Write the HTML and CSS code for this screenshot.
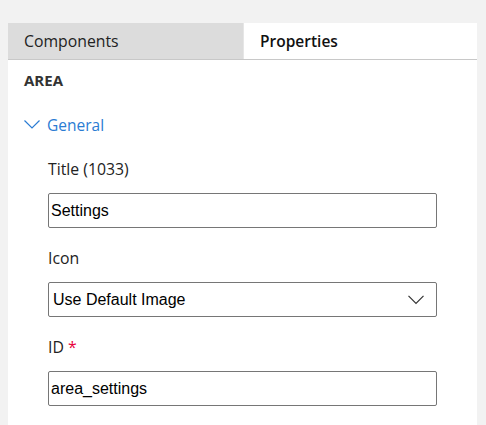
FILE: index.html
```html
<!DOCTYPE html>
<html>
<head>
<meta charset="utf-8">
<link rel="stylesheet" href="styles.css">
</head>
<body>
<div class="panel">
  <div class="tabs">
    <div class="tab tab-inactive">Components</div>
    <div class="tab tab-active">Properties</div>
  </div>
  <div class="content">
    <div class="section-title">AREA</div>
    <div class="group-header">
      <svg class="chev" width="16" height="10" viewBox="0 0 16 10"><path d="M0.5 0.5 L8 8 L15.5 0.5" fill="none" stroke="#2b7cd3" stroke-width="1.2"/></svg>
      <span>General</span>
    </div>
    <div class="fields">
      <div class="label">Title (1033)</div>
      <div class="input">Settings</div>
      <div class="label">Icon</div>
      <div class="input select">
        <span>Use Default Image</span>
        <svg width="16" height="10" viewBox="0 0 16 10"><path d="M0.5 0.8 L8 8.3 L15.5 0.8" fill="none" stroke="#333" stroke-width="1.2"/></svg>
      </div>
      <div class="label">ID <span class="req">*</span></div>
      <div class="input">area_settings</div>
    </div>
  </div>
</div>
</body>
</html>
```
FILE: styles.css
```css
html, body {
  margin: 0;
  padding: 0;
  background: #f2f2f2;
}
body {
  padding: 23px 9px 0 8px;
}
.panel {
  background: #fff;
  height: 402px;
  font-family: "Segoe UI", "Open Sans", "Noto Sans", sans-serif;
  color: #222;
}
.tabs {
  display: grid;
  grid-template-columns: 235px 1fr;
  height: 36px;
  border-bottom: 1px solid #c8c8c8;
}
.tab {
  display: flex;
  align-items: center;
  padding-left: 16px;
  font-size: 15.8px;
}
.tab-inactive {
  background: #dcdcdc;
  color: #222;
}
.tab-active {
  font-weight: 600;
  font-size: 15.5px;
  color: #111;
  border-left: 1px solid #e6e6e6;
}
.content {
  padding-left: 16px;
}
.section-title {
  font-weight: 700;
  font-size: 15px;
  color: #333;
  height: 40px;
  line-height: 40px;
}
.group-header {
  display: flex;
  align-items: center;
  gap: 7px;
  height: 50px;
  color: #2b7cd3;
  font-size: 15.5px;
}
.fields {
  padding-left: 24px;
  width: 389px;
}
.label {
  font-size: 15.8px;
  height: 38px;
  line-height: 38px;
  padding-bottom: 5px;
  color: #222;
}
.req {
  color: #e8003d;
}
.input {
  box-sizing: border-box;
  height: 35px;
  border: 1px solid #767676;
  border-radius: 2px;
  font-family: "Liberation Sans", Arial, sans-serif;
  font-size: 16px;
  color: #000;
  display: flex;
  align-items: center;
  padding-left: 2px;
  margin-bottom: 11px;
}
.select {
  justify-content: space-between;
  padding-left: 4px;
  padding-right: 12px;
}
```
